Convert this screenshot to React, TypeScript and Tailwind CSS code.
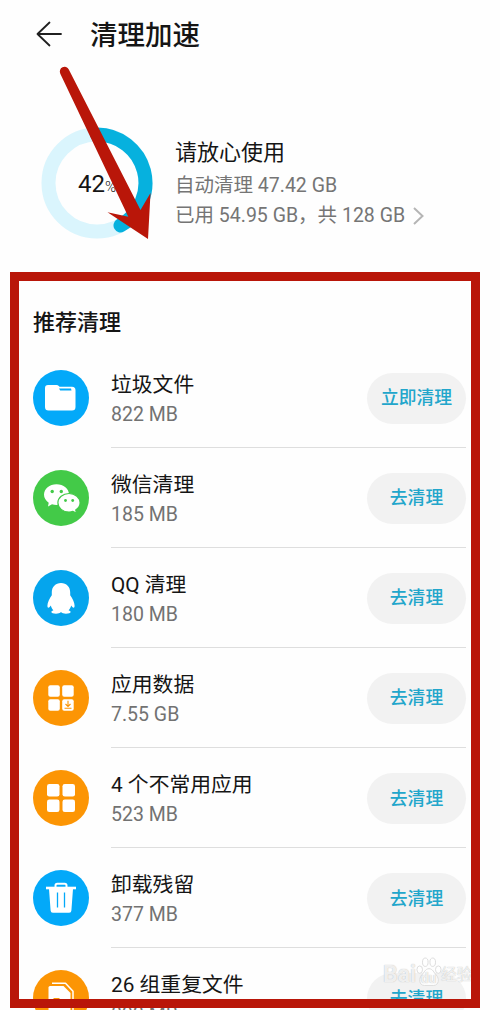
import type { ReactNode } from "react";

type Row = {
  title: string;
  size: string;
  action: string;
  color: string;
  icon: ReactNode;
};

function FolderIcon() {
  return (
    <svg viewBox="0 0 56 56" className="size-14">
      <path
        d="M15 15h8.500c1 0 1.700.4 2.300 1l.7.700h12.500a3.500 3.500 0 0 1 3.500 3.500V37a3.500 3.500 0 0 1-3.500 3.500H15.500A3.500 3.500 0 0 1 12 37V18a3 3 0 0 1 3-3z"
        fill="#fff"
      />
      <path d="M26 18.500h12l.5 2H27.200z" fill="#03a9f9" />
    </svg>
  );
}

function WechatIcon() {
  return (
    <svg viewBox="0 0 56 56" className="size-14">
      <path
        d="M23.500 14.200c-7 0-12.500 4.600-12.500 10.400 0 3.300 1.800 6.200 4.700 8.100l-.7 3.800 4-2.200c1.400.4 2.900.7 4.500.7 7 0 12.500-4.600 12.500-10.400S30.500 14.200 23.500 14.200z"
        fill="#fff"
      />
      <path
        d="M36 23.500c-6.200 0-11.100 4.100-11.100 9.300S29.800 42 36 42c1.400 0 2.700-.2 3.900-.6l3.800 1.900-1-3.300c2.700-1.700 4.400-4.300 4.400-7.200 0-5.200-4.900-9.300-11.100-9.300z"
        fill="#fff"
        stroke="#43ca48"
        strokeWidth="1.200"
      />
      <g fill="#43ca48">
        <circle cx="19.200" cy="21.500" r="1.700" />
        <circle cx="28.300" cy="21.500" r="1.700" />
        <circle cx="32.500" cy="30.500" r="1.400" />
        <circle cx="39.700" cy="30.500" r="1.400" />
      </g>
    </svg>
  );
}

function QQIcon() {
  return (
    <svg viewBox="0 0 56 56" className="size-14">
      <path
        d="M28 13c-5.500 0-9.200 4-9.200 9.300v2.900c-2.300 3.300-4.400 7.200-4.400 10.500 0 1.300.4 2 1 2 .8 0 1.700-1.100 2.400-2.200.4 1.800 1.300 3.400 2.600 4.700-1.300.5-2 1.100-2 1.800 0 1.100 2 1.700 4.600 1.700 2.200 0 4.100-.6 5-1.600.9 1 2.800 1.600 5 1.600 2.600 0 4.600-.6 4.600-1.700 0-.7-.7-1.300-2-1.800 1.300-1.300 2.200-2.900 2.600-4.700.7 1.100 1.600 2.200 2.400 2.200.6 0 1-.7 1-2 0-3.300-2.100-7.200-4.400-10.500v-2.900C37.200 17 33.500 13 28 13z"
        fill="#fff"
      />
    </svg>
  );
}

function AppDataIcon() {
  return (
    <svg viewBox="0 0 56 56" className="size-14">
      <g fill="#fff">
        <rect x="15.300" y="15.300" width="11.500" height="11.500" rx="2" />
        <rect x="29.200" y="15.300" width="11.500" height="11.500" rx="2" />
        <rect x="15.300" y="29.200" width="11.500" height="11.500" rx="2" />
        <rect x="29.200" y="29.200" width="11.500" height="11.500" rx="2" />
      </g>
      <path
        d="M35 30.800v5.200M32.500 34l2.500 2.500 2.500-2.500M31.500 38.300h7"
        fill="none"
        stroke="#fa9405"
        strokeWidth="1.100"
      />
    </svg>
  );
}

function AppsIcon() {
  return (
    <svg viewBox="0 0 56 56" className="size-14">
      <g fill="#fff">
        <rect x="14" y="14" width="12.500" height="12.500" rx="2.300" />
        <rect x="29.500" y="14" width="12.500" height="12.500" rx="2.300" />
        <rect x="14" y="29.500" width="12.500" height="12.500" rx="2.300" />
        <rect x="29.500" y="29.500" width="12.500" height="12.500" rx="2.300" />
      </g>
    </svg>
  );
}

function TrashIcon() {
  return (
    <svg viewBox="0 0 56 56" className="size-14">
      <path
        d="M22.500 17v-1.500a1.800 1.800 0 0 1 1.800-1.800h7.400a1.800 1.800 0 0 1 1.800 1.800V17"
        fill="none"
        stroke="#fff"
        strokeWidth="2"
      />
      <path d="M13 16.700h30v2.600H13z" fill="#fff" />
      <path
        d="M16 19h24l-1.600 21.500a2.300 2.300 0 0 1-2.300 2.200H19.900a2.300 2.300 0 0 1-2.300-2.200z"
        fill="#fff"
      />
      <path d="M24.500 22.500v15M31.500 22.500v15" stroke="#03a9f9" strokeWidth="1.300" />
    </svg>
  );
}

function CopyFilesIcon() {
  return (
    <svg viewBox="0 0 56 56" className="size-14">
      <path d="M17 16h13.500l7 7v19h-22V17.500A1.500 1.500 0 0 1 17 16z" fill="#fff" />
      <path
        d="M19 13.300h13.500l7.500 8V40"
        fill="none"
        stroke="#fff"
        strokeWidth="1.500"
        strokeLinejoin="round"
      />
      <path d="M20.500 28.500h6" stroke="#fa9405" strokeWidth="1" />
    </svg>
  );
}

const rows: Row[] = [
  { title: "垃圾文件", size: "822 MB", action: "立即清理", color: "bg-[#03a9f9]", icon: <FolderIcon /> },
  { title: "微信清理", size: "185 MB", action: "去清理", color: "bg-[#43ca48]", icon: <WechatIcon /> },
  { title: "QQ 清理", size: "180 MB", action: "去清理", color: "bg-[#05a5ed]", icon: <QQIcon /> },
  { title: "应用数据", size: "7.55 GB", action: "去清理", color: "bg-[#fc9504]", icon: <AppDataIcon /> },
  { title: "4 个不常用应用", size: "523 MB", action: "去清理", color: "bg-[#fc9504]", icon: <AppsIcon /> },
  { title: "卸载残留", size: "377 MB", action: "去清理", color: "bg-[#03a9f9]", icon: <TrashIcon /> },
  { title: "26 组重复文件", size: "893 MB", action: "去清理", color: "bg-[#fc9504]", icon: <CopyFilesIcon /> },
];

function CleanRow({ row, last }: { row: Row; last: boolean }) {
  return (
    <li className="flex h-[100.100px] shrink-0 gap-[22px]">
      <div className={`mt-[22px] size-14 shrink-0 rounded-full ${row.color}`}>{row.icon}</div>
      <div
        className={`flex flex-1 justify-between border-b ${last ? "border-transparent" : "border-[#dedede]"}`}
      >
        <div className="pt-[22px] whitespace-nowrap">
          <p className="text-[20.800px] leading-[30px] text-[#151515]">{row.title}</p>
          <p className="text-[19.500px] leading-[30px] text-[#727272]">{row.size}</p>
        </div>
        <button
          type="button"
          className="mt-[25px] h-[51px] w-[99px] rounded-full bg-[#f2f2f2] pt-px text-[17.800px] font-medium text-[#22a6cb]"
        >
          {row.action}
        </button>
      </div>
    </li>
  );
}

// 使用量リング: 42% を淡い色のトラックに重ねる
function UsageRing() {
  return (
    <div className="grid size-28 place-items-center">
      <svg viewBox="0 0 112 112" className="col-start-1 row-start-1 size-28">
        <circle cx="56" cy="56" r="48.500" fill="none" stroke="#daf5fd" strokeWidth="14" />
        <path
          d="M56 7.500A48.500 48.500 0 0 1 79.500 98.400"
          fill="none"
          stroke="#06b1de"
          strokeWidth="14"
          strokeLinecap="round"
        />
      </svg>
      <p className="col-start-1 row-start-1 flex items-baseline pt-[2px] text-[24px] leading-none text-[#151515]">
        42<span className="text-[15px] font-light">%</span>
      </p>
    </div>
  );
}

function Watermark() {
  return (
    <div className="absolute top-[947px] left-[383px] flex h-[44px] items-end text-white/80 [text-shadow:0_0_1px_#aaa]">
      <span className="text-[23px] leading-[32px] font-bold">Bai</span>
      <span className="relative mb-[4px] flex w-[25px] shrink-0 justify-center">
        <svg
          viewBox="0 0 28 32"
          className="h-[31px] w-[26px] shrink-0"
          fill="#fff"
          stroke="#dadada"
          strokeWidth="1"
        >
          <ellipse cx="4" cy="14" rx="3" ry="4" />
          <ellipse cx="10" cy="6" rx="3" ry="4.500" />
          <ellipse cx="18" cy="6" rx="3" ry="4.500" />
          <ellipse cx="24" cy="14" rx="3" ry="4" />
          <path d="M14 13c-4 0-5 4-8 7s-3 11 3 11h10c6 0 6-8 3-11s-4-7-8-7z" />
        </svg>
        <span className="absolute bottom-0 text-[14px] leading-[18px] font-bold">du</span>
      </span>
      <span className="text-[15.500px] leading-[32px] whitespace-nowrap">经验</span>
    </div>
  );
}

export default function App() {
  return (
    <main className="relative flex h-[1010px] w-[500px] flex-col overflow-hidden bg-[#fefefe] font-[Roboto,'Noto_Sans_CJK_SC',sans-serif]">
      <header className="flex h-[70px] shrink-0 items-center gap-[27px] pl-[36px]">
        <svg
          viewBox="0 0 27 26"
          className="mb-[3px] h-[26px] w-[27px]"
          fill="none"
          stroke="#202020"
          strokeWidth="1.800"
          strokeLinecap="round"
          strokeLinejoin="round"
        >
          <path d="M13.500 1.500 1.500 13l12 11.500M1.500 13h23.500" />
        </svg>
        <h1 className="pt-[2px] text-[27.500px] leading-[40px] font-medium text-[#151515]">清理加速</h1>
      </header>

      <section className="flex h-[202px] shrink-0 gap-[22px] pt-[57px] pl-[41px]">
        <UsageRing />
        <div className="pt-[10px] whitespace-nowrap">
          <h2 className="text-[22px] leading-[32px] text-[#151515]">请放心使用</h2>
          <p className="mt-[2px] text-[19.500px] leading-[30px] text-[#757575]">自动清理 47.42 GB</p>
          <p className="flex items-center gap-[8px] text-[19.500px] leading-[30px] text-[#757575]">
            已用 54.95 GB，共 128 GB
            <svg viewBox="0 0 11 18" className="h-[18px] w-[11px]" fill="none" stroke="#b5b5b5" strokeWidth="2">
              <path d="M1 1l8.500 8L1 17" />
            </svg>
          </p>
        </div>
      </section>

      <section className="flex min-h-0 flex-1 flex-col overflow-hidden pr-[34px] pl-[33px]">
        <h2 className="mt-[35px] shrink-0 text-[22px] leading-[32px] font-medium text-[#151515]">
          推荐清理
        </h2>
        <ul className="mt-[8.500px] flex flex-col">
          {rows.map((row, i) => (
            <CleanRow key={row.title} row={row} last={i === rows.length - 1} />
          ))}
        </ul>
      </section>

      <Watermark />

      <div className="pointer-events-none absolute top-[272px] left-[10px] h-[736px] w-[470px] border-[9px] border-[#b91609]" />
      <svg
        viewBox="0 0 110 180"
        className="pointer-events-none absolute top-[65px] left-[55px] h-[180px] w-[110px]"
        fill="#b91609"
      >
        <path d="M5.300 8.700a4.700 4.700 0 0 1 8.500-4.200L85.500 145 95.500 128 93 174 52.500 147.300l20.800 4.400z" />
      </svg>
    </main>
  );
}
